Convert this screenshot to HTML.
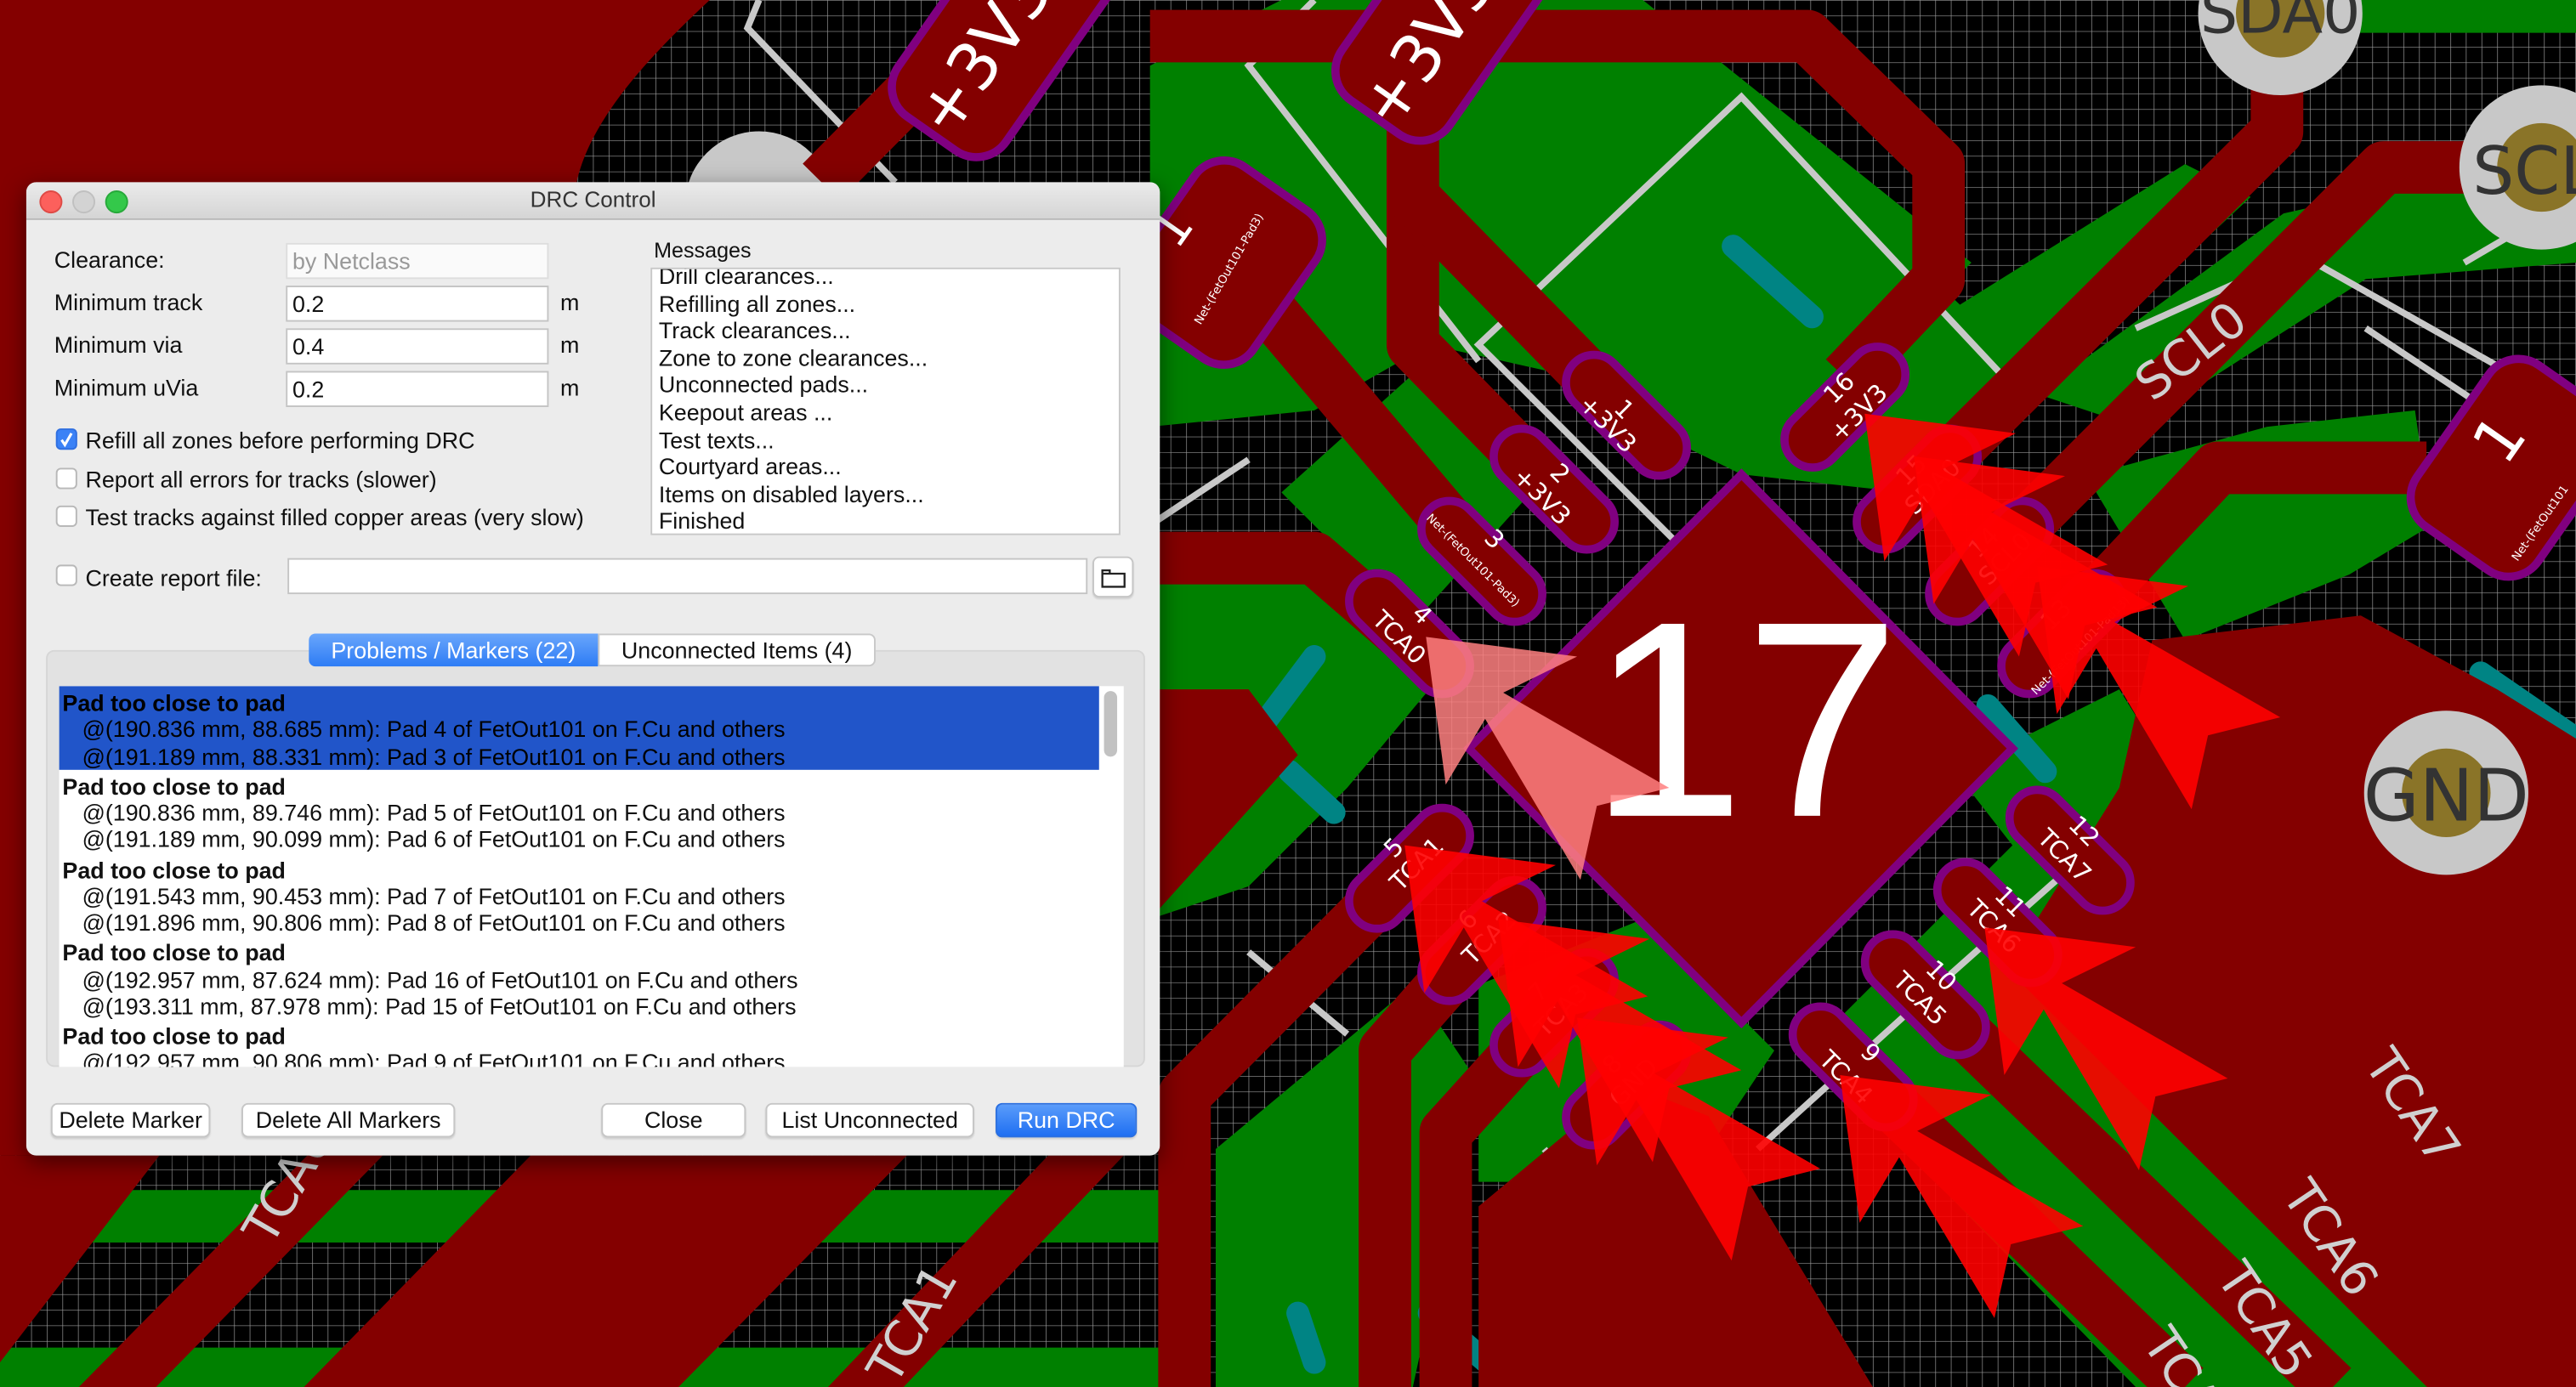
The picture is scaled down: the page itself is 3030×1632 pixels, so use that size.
<!DOCTYPE html>
<html><head><meta charset="utf-8">
<style>
html,body{margin:0;padding:0;width:3030px;height:1632px;overflow:hidden;background:#000;}
#w{position:absolute;left:0;top:0;width:1568px;height:845px;transform:scale(1.93240,1.93136);transform-origin:0 0;font-family:"Liberation Sans",sans-serif;}
svg{position:absolute;left:0;top:0}
.dlg{position:absolute;left:16px;top:111px;width:690px;height:593px;background:#ececec;border-radius:6px;box-shadow:0 4px 14px rgba(0,0,0,.5);overflow:hidden;font-size:13.9px;color:#111}
.tb{position:absolute;left:0;top:0;width:690px;height:22px;background:linear-gradient(#ebebeb,#d5d5d5);border-bottom:1px solid #b9b9b9;text-align:center;line-height:22px;color:#333;font-size:13.5px}
.tl{position:absolute;top:5px;width:12px;height:12px;border-radius:50%}
.a{position:absolute;white-space:nowrap}
.in{position:absolute;background:#fff;border:1px solid #c4c4c4;box-sizing:border-box;height:22px;line-height:20px;padding-left:3px}
.cb{position:absolute;width:13px;height:13px;border:1px solid #b8b8b8;border-radius:3px;background:#fff;box-sizing:border-box}
.btn{position:absolute;height:21px;background:#fff;border:1px solid #c6c6c6;border-radius:4px;box-sizing:border-box;text-align:center;line-height:19px;box-shadow:0 1px 1px rgba(0,0,0,.12)}
.msg div{height:16.6px;line-height:16.6px}
.it{height:50.8px;padding-left:2px;line-height:16.3px;padding-top:2px;box-sizing:border-box;white-space:nowrap}
.it b{display:block}
.it span{display:block;padding-left:12px}
</style></head><body><div id="w">
<svg width="1568" height="845" viewBox="0 0 1568 845">
<defs>
<pattern id="g" width="9.5" height="9.5" patternUnits="userSpaceOnUse"><rect width="9.5" height="9.5" fill="#000"/><path d="M0 0H9.5M0 0V9.5" stroke="#9a9a9a" stroke-width="0.7"/></pattern>
<path id="mk" d="M0,0 L92,12 L47,34 L148,92 L104,103 L94,148 L36,50 L12,90 Z"/>
</defs>
<rect width="1568" height="845" fill="url(#g)"/>
<path d="M0,0 H432 C400,30 360,70 351,111 V704 H0 Z" fill="#840000"/>
<!-- green zones -->
<g fill="#008000">
<polygon points="700,40 780,0 1000,0 1200,160 1100,260 960,230 870,210 800,250 700,260"/>
<polygon points="880,110 1060,60 1240,230 1160,300 1060,289 960,240"/>
<polygon points="1240,240 1390,130 1480,110 1568,120 1568,160 1440,170 1300,260"/>
<polygon points="1270,290 1380,260 1470,250 1480,320 1430,350 1330,390"/>
<polygon points="700,330 820,330 870,420 820,480 760,540 700,560"/>
<polygon points="780,300 880,210 950,280 860,380"/>
<polygon points="1100,640 1250,490 1400,620 1568,760 1568,845 1300,845"/>
<polygon points="1190,470 1290,420 1340,500 1260,560"/>
<polygon points="900,600 1000,560 1080,640 1040,700 960,720 900,720"/>
<polygon points="740,700 860,600 900,660 860,845 740,845"/>
<polygon points="0,725 709,725 709,757 0,757"/>
<polygon points="0,821 709,821 709,845 0,845"/>
<polygon points="1380,0 1568,0 1568,20 1380,20"/>
<polygon points="1170,200 1330,100 1370,120 1220,260"/>
</g>
<!-- bottom stripes -->
<g fill="#840000">
<polygon points="0,704 97,704 0,830"/>
<polygon points="187,704 233,704 95,845 48,845"/>
<polygon points="323,704 552,704 413,845 185,845"/>
<polygon points="638,704 684,704 550,845 504,845"/>
<rect x="709" y="720" width="20" height="125"/>
</g>
<text x="165" y="760" transform="rotate(-60 165 760)" fill="#d0d0d0" font-family="DejaVu Sans" font-size="30">TCA0</text>
<text x="545" y="845" transform="rotate(-60 545 845)" fill="#d0d0d0" font-family="DejaVu Sans" font-size="30">TCA1</text>
<!-- silkscreen -->
<g stroke="#c8c8c8" stroke-width="4" fill="none">
<polyline points="462,0 455,17 545,111"/>
<polyline points="700,320 760,280"/>
<polyline points="800,0 760,40 900,220"/>
<polyline points="1060,370 900,210 1060,59 1220,230"/>
<polyline points="1300,200 1400,155 1568,250"/>
<polyline points="1320,500 1420,560 1530,660"/>
<polyline points="1070,700 1180,600 1270,520"/>
<polyline points="760,580 820,630"/>
<polyline points="940,700 990,760"/>
<polyline points="1440,200 1560,280"/>
<polyline points="1500,160 1568,120"/>
</g>
<circle cx="462" cy="125" r="45" fill="#c8c8c8"/>
<!-- teal -->
<g stroke="#008484" stroke-width="14" stroke-linecap="round" fill="none">
<polyline points="1055,150 1103,193"/>
<polyline points="800,400 770,440"/>
<polyline points="785,470 812,495"/>
<polyline points="1510,410 1568,450"/>
<polyline points="1210,430 1245,470"/>
<polyline points="870,800 905,830"/>
<polyline points="790,800 800,830"/>
<polyline points="720,660 705,690"/>
<polyline points="1085,800 1095,820"/>
</g>
<!-- tracks -->
<g stroke="#840000" stroke-width="32" fill="none" stroke-linejoin="round">
<polyline points="700,22 1100,22 1180,100 1180,170 1123,230"/>
<polyline points="860,60 860,210 946,298"/>
<polyline points="860,120 990,253"/>
<polyline points="740,150 902,342"/>
<polyline points="700,340 800,340 853,386"/>
<polyline points="500,111 590,20"/>
<polyline points="858,529 721,667 721,845"/>
<polyline points="902,573 843,640 843,845"/>
<polyline points="946,617 880,690 880,845"/>
<polyline points="1260,518 1568,830"/>
<polyline points="1216,562 1500,845"/>
<polyline points="1172,606 1420,845"/>
<polyline points="1128,650 1330,845"/>
<polyline points="1167,298 1386,80 1386,0"/>
<polyline points="1211,342 1451,102 1540,102"/>
<polyline points="1255,386 1350,285 1477,285"/>
</g>
<polygon fill="#840000" points="900,845 900,735 990,660 1040,680 1140,845"/>
<polygon fill="#840000" points="1310,390 1437,375 1520,420 1568,450 1568,845 1497,845 1330,690 1240,560 1290,480"/>
<polygon fill="#840000" points="700,420 760,420 790,460 700,560"/>
<!-- diamond -->
<polygon points="1060,289 1225,456 1060,623 894,456" fill="#840000" stroke="#800080" stroke-width="5"/>
<text x="1062" y="497" text-anchor="middle" fill="#fff" font-family="Liberation Sans" font-size="170">17</text>
<!-- pads -->
<g fill="#840000" stroke="#800080" stroke-width="5">
<rect x="-45" y="-17" width="90" height="34" rx="17" transform="translate(990,253) rotate(45)"/>
<rect x="-45" y="-17" width="90" height="34" rx="17" transform="translate(946,298) rotate(45)"/>
<rect x="-45" y="-17" width="90" height="34" rx="17" transform="translate(902,342) rotate(45)"/>
<rect x="-45" y="-17" width="90" height="34" rx="17" transform="translate(858,386) rotate(45)"/>
<rect x="-45" y="-17" width="90" height="34" rx="17" transform="translate(1260,518) rotate(45)"/>
<rect x="-45" y="-17" width="90" height="34" rx="17" transform="translate(1216,562) rotate(45)"/>
<rect x="-45" y="-17" width="90" height="34" rx="17" transform="translate(1172,606) rotate(45)"/>
<rect x="-45" y="-17" width="90" height="34" rx="17" transform="translate(1128,650) rotate(45)"/>
<rect x="-45" y="-17" width="90" height="34" rx="17" transform="translate(1123,248) rotate(-45)"/>
<rect x="-45" y="-17" width="90" height="34" rx="17" transform="translate(1167,298) rotate(-45)"/>
<rect x="-45" y="-17" width="90" height="34" rx="17" transform="translate(1211,342) rotate(-45)"/>
<rect x="-45" y="-17" width="90" height="34" rx="17" transform="translate(1255,386) rotate(-45)"/>
<rect x="-45" y="-17" width="90" height="34" rx="17" transform="translate(858,529) rotate(-45)"/>
<rect x="-45" y="-17" width="90" height="34" rx="17" transform="translate(902,573) rotate(-45)"/>
<rect x="-45" y="-17" width="90" height="34" rx="17" transform="translate(946,617) rotate(-45)"/>
<rect x="-45" y="-17" width="90" height="34" rx="17" transform="translate(990,661) rotate(-45)"/>
<rect x="-75" y="-40" width="150" height="80" rx="22" transform="translate(610,20) rotate(-55)"/>
<rect x="-75" y="-40" width="150" height="80" rx="22" transform="translate(880,10) rotate(-55)"/>
<rect x="-55" y="-45" width="110" height="90" rx="22" transform="translate(745,160) rotate(-55)"/>
<rect x="-60" y="-45" width="120" height="90" rx="22" transform="translate(1530,285) rotate(-55)"/>
</g>
<!-- pad texts -->
<g fill="#fff" font-family="DejaVu Sans" font-size="15" text-anchor="middle">
<text transform="translate(985,253) rotate(45)">1</text><text transform="translate(975,262) rotate(45)">+3V3</text>
<text transform="translate(946,292) rotate(45)">2</text><text transform="translate(935,306) rotate(45)">+3V3</text>
<text transform="translate(906,332) rotate(45)">3</text>
<text transform="translate(862,378) rotate(45)">4</text><text transform="translate(848,392) rotate(45)">TCA0</text>
<text transform="translate(1265,510) rotate(45)">12</text><text transform="translate(1253,525) rotate(45)">TCA7</text>
<text transform="translate(1220,553) rotate(45)">11</text><text transform="translate(1210,568) rotate(45)">TCA6</text>
<text transform="translate(1178,598) rotate(45)">10</text><text transform="translate(1165,612) rotate(45)">TCA5</text>
<text transform="translate(1135,645) rotate(45)">9</text><text transform="translate(1120,660) rotate(45)">TCA4</text>
<text transform="translate(1123,240) rotate(-45)">16</text><text transform="translate(1135,255) rotate(-45)">+3V3</text>
<text transform="translate(1167,290) rotate(-45)">15</text><text transform="translate(1180,300) rotate(-45)">SDA0</text>
<text transform="translate(1211,334) rotate(-45)">14</text><text transform="translate(1224,344) rotate(-45)">SCL0</text>
<text transform="translate(1255,378) rotate(-45)">13</text>
<text transform="translate(852,520) rotate(-45)">5</text><text transform="translate(866,530) rotate(-45)">TCA1</text>
<text transform="translate(897,564) rotate(-45)">6</text><text transform="translate(910,575) rotate(-45)">TCA2</text>
<text transform="translate(940,608) rotate(-45)">7</text><text transform="translate(954,619) rotate(-45)">TCA3</text>
<text transform="translate(985,652) rotate(-45)">8</text><text transform="translate(998,663) rotate(-45)">GND</text>
</g>
<g fill="#fff" font-family="DejaVu Sans" font-size="7" text-anchor="middle">
<text transform="translate(895,343) rotate(45)">Net-(FetOut101-Pad3)</text>
<text transform="translate(750,165) rotate(-60)">Net-(FetOut101-Pad3)</text>
<text transform="translate(1268,395) rotate(-45)">Net-(FetOut101-Pad13)</text>
<text transform="translate(1548,320) rotate(-55)">Net-(FetOut101</text>
</g>
<g fill="#fff" font-family="DejaVu Sans" font-size="40" text-anchor="middle">
<text transform="translate(610,40) rotate(-55)">+3V3</text>
<text transform="translate(880,35) rotate(-55)">+3V3</text>
<text transform="translate(1532,275) rotate(-55)" font-size="38">1</text>
<text transform="translate(722,145) rotate(-55)" font-size="30">1</text>
</g>
<g fill="#d0d0d0" font-family="DejaVu Sans" font-size="30" text-anchor="middle">
<text transform="translate(1340,222) rotate(-38)">SCL0</text>
<text transform="translate(1460,680) rotate(56)">TCA7</text>
<text transform="translate(1410,760) rotate(56)">TCA6</text>
<text transform="translate(1370,810) rotate(56)">TCA5</text>
<text transform="translate(1325,850) rotate(56)">TCA4</text>
</g>
<!-- connector circles -->
<circle cx="1388" cy="8" r="50" fill="#c8c8c8"/><circle cx="1388" cy="8" r="27" fill="#8a7428"/>
<text x="1388" y="20" text-anchor="middle" fill="#333" font-family="DejaVu Sans" font-size="36">SDA0</text>
<circle cx="1547" cy="102" r="50" fill="#c8c8c8"/><circle cx="1547" cy="102" r="27" fill="#8a7428"/>
<text x="1505" y="118" fill="#333" font-family="DejaVu Sans" font-size="40">SCL</text>
<circle cx="1489" cy="483" r="50" fill="#c8c8c8"/><circle cx="1489" cy="483" r="27" fill="#8a7428"/>
<text x="1489" y="500" text-anchor="middle" fill="#333" font-family="DejaVu Sans" font-size="44">GND</text>
<!-- markers -->
<g fill="#ff0000" fill-opacity="0.9">
<use href="#mk" x="1135" y="252"/>
<use href="#mk" x="1165" y="278"/>
<use href="#mk" x="1240" y="345"/>
<use href="#mk" x="855" y="515"/>
<use href="#mk" x="912" y="560"/>
<use href="#mk" x="960" y="620"/>
<use href="#mk" x="1120" y="655"/>
<use href="#mk" x="1208" y="565"/>
</g>
<g fill="#ff8080" fill-opacity="0.85">
<use href="#mk" x="868" y="388"/>
</g>
</svg>

<div class="dlg">
<div class="tb">DRC Control</div>
<div class="tl" style="left:8px;background:#fc605c;border:0.5px solid #de4a45"></div>
<div class="tl" style="left:28px;background:#d3d3d3;border:0.5px solid #c0c0c0"></div>
<div class="tl" style="left:48px;background:#34c84a;border:0.5px solid #27a93a"></div>

<div class="a" style="left:17px;top:39px">Clearance:</div>
<div class="in" style="left:158px;top:37px;width:160px;color:#999;background:#fafafa;border-color:#ddd">by Netclass</div>
<div class="a" style="left:17px;top:65px">Minimum track</div>
<div class="in" style="left:158px;top:63px;width:160px">0.2</div><div class="a" style="left:325px;top:65px">m</div>
<div class="a" style="left:17px;top:91px">Minimum via</div>
<div class="in" style="left:158px;top:89px;width:160px">0.4</div><div class="a" style="left:325px;top:91px">m</div>
<div class="a" style="left:17px;top:117px">Minimum uVia</div>
<div class="in" style="left:158px;top:115px;width:160px">0.2</div><div class="a" style="left:325px;top:117px">m</div>

<div class="cb" style="left:18px;top:150px;background:#3b82f6;border-color:#2f6fe0"><svg width="13" height="13" style="position:absolute;left:-1px;top:-1px"><path d="M3.5 7 L5.5 10 L9.5 3" stroke="#fff" stroke-width="1.6" fill="none"/></svg></div>
<div class="a" style="left:36px;top:149px">Refill all zones before performing DRC</div>
<div class="cb" style="left:18px;top:174px"></div>
<div class="a" style="left:36px;top:173px">Report all errors for tracks (slower)</div>
<div class="cb" style="left:18px;top:197px"></div>
<div class="a" style="left:36px;top:196px">Test tracks against filled copper areas (very slow)</div>

<div class="a" style="left:382px;top:34px;font-size:13px">Messages</div>
<div style="position:absolute;left:380px;top:52px;width:286px;height:163px;background:#fff;border:1px solid #c8c8c8;box-sizing:border-box;overflow:hidden">
<div class="msg" style="position:absolute;left:4px;top:-4px">
<div>Drill clearances...</div><div>Refilling all zones...</div><div>Track clearances...</div><div>Zone to zone clearances...</div><div>Unconnected pads...</div><div>Keepout areas ...</div><div>Test texts...</div><div>Courtyard areas...</div><div>Items on disabled layers...</div><div>Finished</div></div></div>

<div class="cb" style="left:18px;top:233px"></div>
<div class="a" style="left:36px;top:233px">Create report file:</div>
<div class="in" style="left:159px;top:229px;width:487px;height:22px"></div>
<div class="btn" style="left:649px;top:228px;width:25px;height:25px"><svg width="16" height="14" style="position:absolute;left:4px;top:5px"><path d="M1 2.5 H5.5 V4.5 H14.5 V12.5 H1 Z M1 4.5 H5.5" stroke="#222" stroke-width="1.2" fill="none"/></svg></div>

<div style="position:absolute;left:12px;top:285px;width:669px;height:254px;background:#e2e2e2;border:1px solid #d6d6d6;border-radius:5px;box-sizing:border-box"></div>
<div style="position:absolute;left:172px;top:275px;width:176px;height:20px;background:linear-gradient(#6aa6fb,#2d7cf5);color:#fff;text-align:center;line-height:20px;border-radius:4px 0 0 4px">Problems / Markers (22)</div>
<div style="position:absolute;left:348px;top:275px;width:169px;height:20px;background:#fff;border:1px solid #c9c9c9;box-sizing:border-box;text-align:center;line-height:18px;border-radius:0 4px 4px 0">Unconnected Items (4)</div>

<div style="position:absolute;left:20px;top:307px;width:648px;height:232px;background:#fff;overflow:hidden">
<div class="it" style="background:#2155c9;width:633px;color:#000"><b>Pad too close to pad</b><span>@(190.836 mm, 88.685 mm): Pad 4 of FetOut101 on F.Cu and others</span><span>@(191.189 mm, 88.331 mm): Pad 3 of FetOut101 on F.Cu and others</span></div>
<div class="it"><b>Pad too close to pad</b><span>@(190.836 mm, 89.746 mm): Pad 5 of FetOut101 on F.Cu and others</span><span>@(191.189 mm, 90.099 mm): Pad 6 of FetOut101 on F.Cu and others</span></div>
<div class="it"><b>Pad too close to pad</b><span>@(191.543 mm, 90.453 mm): Pad 7 of FetOut101 on F.Cu and others</span><span>@(191.896 mm, 90.806 mm): Pad 8 of FetOut101 on F.Cu and others</span></div>
<div class="it"><b>Pad too close to pad</b><span>@(192.957 mm, 87.624 mm): Pad 16 of FetOut101 on F.Cu and others</span><span>@(193.311 mm, 87.978 mm): Pad 15 of FetOut101 on F.Cu and others</span></div>
<div class="it"><b>Pad too close to pad</b><span>@(192.957 mm, 90.806 mm): Pad 9 of FetOut101 on F.Cu and others</span></div>
<div style="position:absolute;left:636px;top:3px;width:8px;height:40px;background:#c2c2c2;border-radius:4px"></div>
</div>

<div class="btn" style="left:15px;top:561px;width:97px">Delete Marker</div>
<div class="btn" style="left:131px;top:561px;width:130px">Delete All Markers</div>
<div class="btn" style="left:350px;top:561px;width:88px">Close</div>
<div class="btn" style="left:450px;top:561px;width:127px">List Unconnected</div>
<div class="btn" style="left:590px;top:561px;width:86px;background:linear-gradient(#5a9cfa,#1f6ff2);color:#fff;border-color:#2a6fe0">Run DRC</div>
</div>
</div></body></html>
